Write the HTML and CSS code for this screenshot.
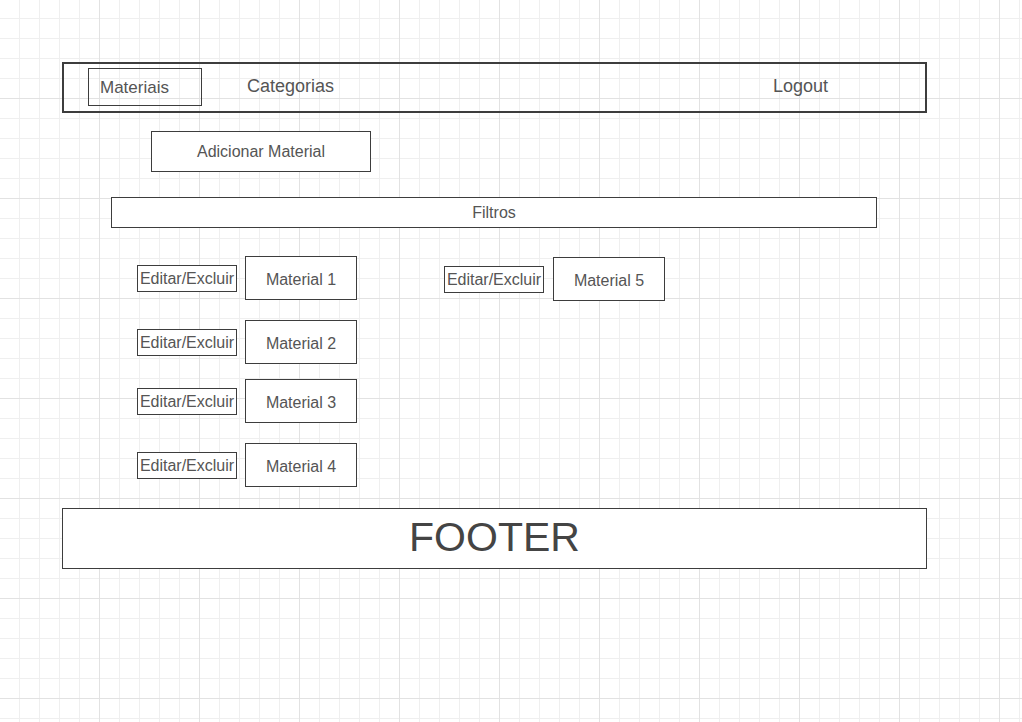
FILE: index.html
```html
<!DOCTYPE html>
<html lang="pt">
<head>
  <meta charset="UTF-8" />
  <title>Materiais</title>
  <meta name="viewport" content="width=device-width, initial-scale=1.0"/>
  <link rel="stylesheet" href="styles.css">
</head>
<body>
  <div class="canvas">
    <nav class="menu">
      <a class="menu-item active" href="#">Materiais</a>
      <a class="menu-item categories" href="#">Categorias</a>
      <a class="menu-item logout" href="#">Logout</a>
    </nav>

    <button class="btn-add">Adicionar Material</button>

    <div class="filters">Filtros</div>

    <div class="materials">
      <div class="col">
        <div class="item">
          <span class="edit">Editar/Excluir</span>
          <span class="card">Material 1</span>
        </div>
        <div class="item">
          <span class="edit">Editar/Excluir</span>
          <span class="card">Material 2</span>
        </div>
        <div class="item tight">
          <span class="edit">Editar/Excluir</span>
          <span class="card">Material 3</span>
        </div>
        <div class="item">
          <span class="edit">Editar/Excluir</span>
          <span class="card">Material 4</span>
        </div>
      </div>
      <div class="col col-2">
        <div class="item">
          <span class="edit">Editar/Excluir</span>
          <span class="card">Material 5</span>
        </div>
      </div>
    </div>

    <footer class="footer">FOOTER</footer>
  </div>
</body>
</html>
```

FILE: styles.css
```css
:root {
  --line: #3d3d3d;
  --text: #555;
  --grid: #efefef;
  --grid-major: #e2e2e2;
}

* {
  box-sizing: border-box;
  margin: 0;
  padding: 0;
  font-family: 'Liberation Sans', Arial, sans-serif;
}

html {
  min-height: 100%;
  background-color: #fff;
  background-image:
    linear-gradient(to right, var(--grid-major) 1px, transparent 1px),
    linear-gradient(to bottom, var(--grid-major) 1px, transparent 1px),
    linear-gradient(to right, var(--grid) 1px, transparent 1px),
    linear-gradient(to bottom, var(--grid) 1px, transparent 1px);
  background-size: 100px 100px, 100px 100px, 20px 20px, 20px 20px;
  background-position: 99px 98px, 99px 98px, 19px 18px, 19px 18px;
}

body {
  color: var(--text);
}

.canvas {
  width: 927px;
  padding: 62px 0 0 62px;
}

/* top menu */
.menu {
  display: flex;
  align-items: flex-start;
  height: 51px;
  padding: 4px 0 0 24px;
  border: 2px solid var(--line);
}

.menu-item {
  display: flex;
  align-items: center;
  height: 38px;
  padding-bottom: 1px;
  color: var(--text);
  text-decoration: none;
  font-size: 18px;
  white-space: nowrap;
}

.menu-item.active {
  width: 114px;
  padding: 2px 0 0 11px;
  border: 1px solid var(--line);
  font-size: 17px;
}

.categories {
  margin-left: 45px;
}

.logout {
  margin-left: auto;
  margin-right: 97px;
}

/* actions */
.btn-add {
  display: flex;
  align-items: center;
  justify-content: center;
  width: 220px;
  height: 41px;
  margin: 18px 0 0 89px;
  background: #fff;
  border: 1px solid var(--line);
  color: var(--text);
  font-size: 16px;
}

.filters {
  display: flex;
  align-items: center;
  justify-content: center;
  width: 766px;
  height: 31px;
  margin: 25px 0 0 49px;
  background: #fff;
  border: 1px solid var(--line);
  font-size: 16px;
}

/* material list */
.materials {
  display: flex;
  margin: 28px 0 0 75px;
}

.col-2 {
  margin: 1px 0 0 87px;
}

.item {
  display: flex;
  align-items: flex-start;
  gap: 8px;
}

.item + .item {
  margin-top: 20px;
}

.item.tight {
  margin-top: 15px;
}

.col-2 .item {
  gap: 9px;
}

.edit {
  display: flex;
  align-items: center;
  justify-content: center;
  width: 100px;
  height: 27px;
  margin-top: 9px;
  background: #fff;
  border: 1px solid var(--line);
  font-size: 16px;
  white-space: nowrap;
}

.card {
  display: flex;
  align-items: center;
  justify-content: center;
  width: 112px;
  height: 44px;
  padding-top: 3px;
  background: #fff;
  border: 1px solid var(--line);
  font-size: 16px;
}

/* footer */
.footer {
  display: flex;
  align-items: center;
  justify-content: center;
  width: 865px;
  height: 61px;
  margin-top: 21px;
  padding-bottom: 2px;
  background: #fff;
  border: 1px solid var(--line);
  font-size: 41px;
  color: #444;
}
```
